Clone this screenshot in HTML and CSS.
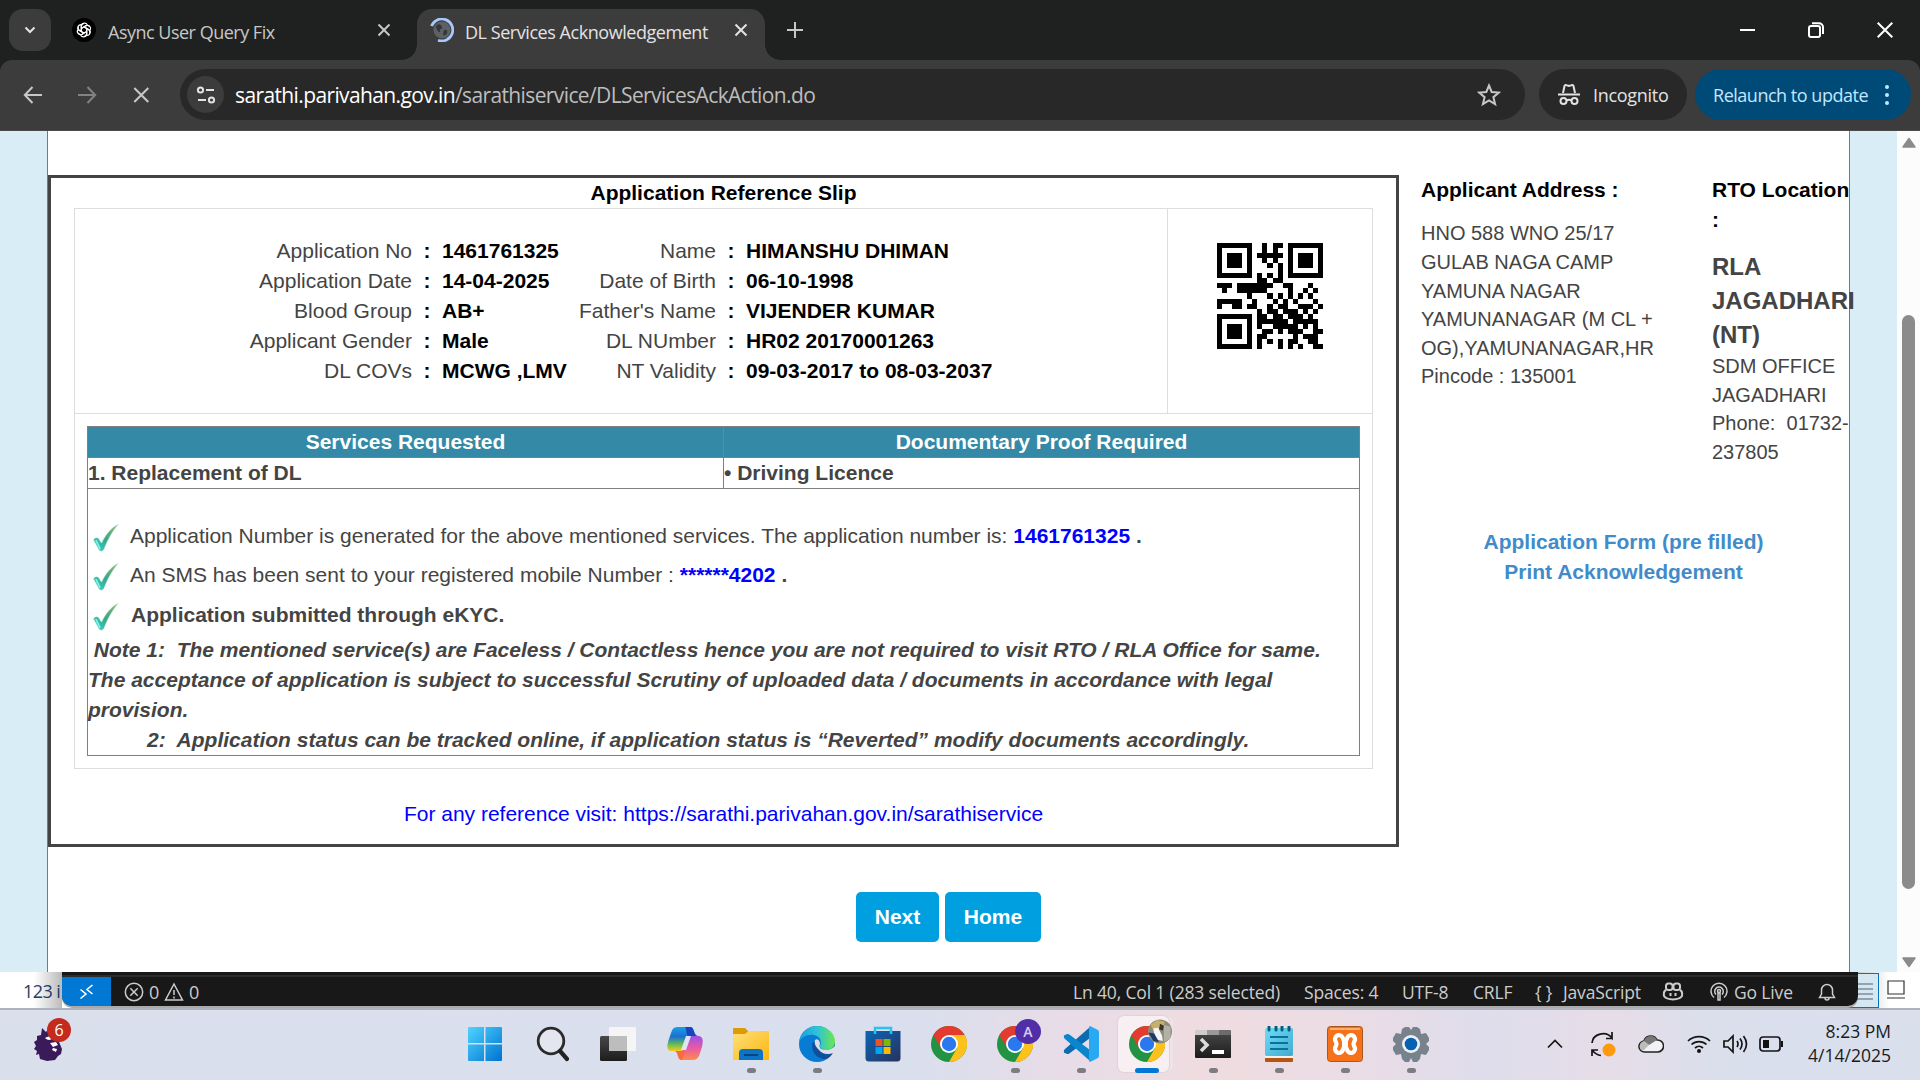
FILE: index.html
```html
<!DOCTYPE html>
<html lang="en">
<head>
<meta charset="utf-8">
<title>DL Services Acknowledgement</title>
<link rel="stylesheet" href="styles.css">
</head>
<body>
<svg class="defs" width="0" height="0" aria-hidden="true">
  <defs>
    <linearGradient id="tickFill" x1="0" y1="1" x2="1" y2="0"><stop offset="0" stop-color="#3ed6d2"/><stop offset=".45" stop-color="#35a888"/><stop offset="1" stop-color="#9bb66c"/></linearGradient>
    <linearGradient id="winFill" x1="0" y1="0" x2="1" y2="1"><stop offset="0" stop-color="#4fd4ff"/><stop offset="1" stop-color="#0072d0"/></linearGradient>
    <linearGradient id="folderFill" x1="0" y1="0" x2="1" y2="1"><stop offset="0" stop-color="#ffe07a"/><stop offset="1" stop-color="#fbb60f"/></linearGradient>
    <linearGradient id="darkFill" x1="0" y1="0" x2="0" y2="1"><stop offset="0" stop-color="#484848"/><stop offset="1" stop-color="#1c1c1c"/></linearGradient>
    <linearGradient id="cpLeft" x1="0" y1="0" x2="0" y2="1"><stop offset="0" stop-color="#1a9ee8"/><stop offset=".4" stop-color="#1d6fd0"/><stop offset=".7" stop-color="#5cb85c"/><stop offset="1" stop-color="#f5cf1c"/></linearGradient>
    <linearGradient id="cpRight" x1="0" y1="0" x2="0" y2="1"><stop offset="0" stop-color="#9b50e8"/><stop offset=".5" stop-color="#e85aa5"/><stop offset="1" stop-color="#ff8a4c"/></linearGradient>
    <linearGradient id="edgeTop" x1="0" y1="0" x2="1" y2="0"><stop offset="0" stop-color="#1b9de0"/><stop offset=".5" stop-color="#2dc2d8"/><stop offset="1" stop-color="#6ce84e"/></linearGradient>
    <linearGradient id="storeFill" x1="0" y1="0" x2="1" y2="1"><stop offset="0" stop-color="#0a66b8"/><stop offset="1" stop-color="#27325c"/></linearGradient>
    <linearGradient id="noteFill" x1="0" y1="0" x2="1" y2="1"><stop offset="0" stop-color="#6cdcf6"/><stop offset="1" stop-color="#45a9cf"/></linearGradient>
    <symbol id="tick" viewBox="0 0 28 28"><path d="M1 16c1-3 5-3 6 0l2 3C13 11 18 4 26 0c-6 7-11 16-14 24-1 4-5 4-6 1z" fill="url(#tickFill)" stroke="#cfeee4" stroke-width=".600"/><path d="M3.500 16l4 9" stroke="#7df0ea" stroke-width="1.800" fill="none"/></symbol>
    <symbol id="chrome" viewBox="0 0 36 36"><circle cx="18" cy="18" r="18" fill="#229342"/><path d="M18 9h15.600A18 18 0 0 1 18 36l7.800-13.500z" fill="#fcc21b"/><path d="M18 9h15.600A18 18 0 0 0 2.400 9l7.800 13.500z" fill="#e33b2e"/><circle cx="18" cy="18" r="9" fill="#fff"/><circle cx="18" cy="18" r="7.200" fill="#2a78ee"/></symbol>
  </defs>
</svg>

<header class="browser">
  <div class="tabstrip">
    <div class="tab-search"><svg width="12" height="8" viewBox="0 0 12 8"><path d="M1.500 1.500L6 6l4.500-4.500" class="ico light"/></svg></div>
    <div class="tab">
      <svg class="favicon" width="24" height="24" viewBox="0 0 24 24"><circle cx="12" cy="12" r="12" fill="#000"/><g fill="none" stroke="#fff" stroke-width="1.200"><path id="petal" d="M9.300 13.600V8.300a3.200 3.200 0 0 1 6-1.500M9.300 10.400L13.800 7.800a3.100 3.100 0 0 1 3.900 1"/><use href="#petal" transform="rotate(60 12 12)"/><use href="#petal" transform="rotate(120 12 12)"/><use href="#petal" transform="rotate(180 12 12)"/><use href="#petal" transform="rotate(240 12 12)"/><use href="#petal" transform="rotate(300 12 12)"/></g></svg>
      <span class="tab-title t1">Async User Query Fix</span>
      <svg class="tab-x" width="14" height="14" viewBox="0 0 14 14"><path d="M1.500 1.500l11 11M12.500 1.500l-11 11" class="ico"/></svg>
    </div>
    <div class="tab active">
      <svg class="favicon" width="24" height="24" viewBox="0 0 24 24"><circle cx="12" cy="12" r="8.500" fill="#5d6064"/><path d="M6 8c3-3 5-2 6 1s-3 1-2 4-4 0-4-5zM14 12c2-1 4 0 3 3s-4 3-4 1z" fill="#34373a"/><path d="M1.500 8A11 11 0 1 1 8 22.300" fill="none" stroke="#a8c7fa" stroke-width="2.800"/></svg>
      <span class="tab-title t2">DL Services Acknowledgement</span>
      <svg class="tab-x" width="14" height="14" viewBox="0 0 14 14"><path d="M1.500 1.500l11 11M12.500 1.500l-11 11" class="ico light"/></svg>
    </div>
    <svg class="new-tab" width="18" height="18" viewBox="0 0 18 18"><path d="M9 1v16M1 9h16" class="ico"/></svg>
    <div class="win-buttons">
      <svg width="15" height="16" viewBox="0 0 15 16"><path d="M0 8h15" class="win"/></svg>
      <svg width="16" height="16" viewBox="0 0 16 16"><rect x="1" y="4" width="11" height="11" rx="2" class="win"/><path d="M4 1.200h7a4 4 0 0 1 4 4V12" class="win"/></svg>
      <svg width="16" height="16" viewBox="0 0 16 16"><path d="M.7.700l14.600 14.600M15.300.7L.7 15.300" class="win"/></svg>
    </div>
  </div>
  <div class="toolbar">
    <svg class="nav" width="20" height="18" viewBox="0 0 20 18"><path d="M19 9H2M9.500 1L1.800 9l7.700 8" class="ico"/></svg>
    <svg class="nav dim" width="20" height="18" viewBox="0 0 20 18"><path d="M1 9h17M10.500 1l7.700 8-7.700 8" class="ico"/></svg>
    <svg class="nav" width="20" height="18" viewBox="0 0 20 18"><path d="M3.300 2l14 14M17.300 2l-14 14" class="ico"/></svg>
    <div class="omnibox">
      <div class="site-info"><svg width="20" height="18" viewBox="0 0 20 18"><g fill="none" stroke="#e3e3e3" stroke-width="2"><circle cx="4.500" cy="4" r="2.600"/><path d="M10 4h8"/><circle cx="15.500" cy="14" r="2.600"/><path d="M2 14h8"/></g></svg></div>
      <span class="url"><b>sarathi.parivahan.gov.in</b>/sarathiservice/DLServicesAckAction.do</span>
      <svg class="star" width="24" height="24" viewBox="0 0 24 24"><path d="M12 2.500l2.700 6.500 7.100.6-5.400 4.600 1.700 6.900L12 17.400l-6.100 3.700 1.700-6.900-5.400-4.600 7.100-.6z" class="ico"/></svg>
    </div>
    <div class="pill incognito"><svg width="22" height="22" viewBox="0 0 22 22"><path d="M5 9l1.500-7c.3-1 1-1.200 1.800-.8 1.600.8 3.800.8 5.400 0 .8-.4 1.500-.2 1.800.8L17 9" fill="none" stroke="#e3e3e3" stroke-width="2"/><path d="M0 10.500h22" stroke="#e3e3e3" stroke-width="2"/><g fill="none" stroke="#e3e3e3" stroke-width="2"><circle cx="5.500" cy="17" r="3"/><circle cx="16.500" cy="17" r="3"/><path d="M8.500 16.500q2.500-1.500 5 0"/></g></svg><span>Incognito</span></div>
    <div class="pill relaunch"><span>Relaunch to update</span><i class="dots"></i></div>
  </div>
</header>

<main class="viewport">
  <div class="page">
    <div class="columns">
      <section class="slip">
        <h1>Application Reference Slip</h1>
        <div class="panel">
          <div class="summary">
            <dl class="details">
              <dt>Application No</dt><i>:</i><dd>1461761325</dd><dt>Name</dt><i>:</i><dd>HIMANSHU DHIMAN</dd>
              <dt>Application Date</dt><i>:</i><dd>14-04-2025</dd><dt>Date of Birth</dt><i>:</i><dd>06-10-1998</dd>
              <dt>Blood Group</dt><i>:</i><dd>AB+</dd><dt>Father's Name</dt><i>:</i><dd>VIJENDER KUMAR</dd>
              <dt>Applicant Gender</dt><i>:</i><dd>Male</dd><dt>DL NUmber</dt><i>:</i><dd>HR02 20170001263</dd>
              <dt>DL COVs</dt><i>:</i><dd>MCWG ,LMV</dd><dt>NT Validity</dt><i>:</i><dd>09-03-2017 to 08-03-2037</dd>
            </dl>
            <div class="qr"><svg width="106" height="106" viewBox="0 0 21 21" shape-rendering="crispEdges"><path id="qr-modules"/></svg></div>
          </div>
          <div class="services">
            <div class="row head"><span>Services Requested</span><span>Documentary Proof Required</span></div>
            <div class="row"><span>1. Replacement of DL</span><span>• Driving Licence</span></div>
            <div class="messages">
              <p class="msg"><svg width="28" height="28"><use href="#tick"/></svg><span>Application Number is generated for the above mentioned services. The application number is: <b><em>1461761325</em> .</b></span></p>
              <p class="msg"><svg width="28" height="28"><use href="#tick"/></svg><span>An SMS has been sent to your registered mobile Number : <b><em>******4202</em> .</b></span></p>
              <p class="msg"><svg width="28" height="28"><use href="#tick"/></svg><b class="ekyc">Application submitted through eKYC.</b></p>
              <p class="note">&nbsp;Note 1:&nbsp; The mentioned service(s) are Faceless / Contactless hence you are not required to visit RTO / RLA Office for same.<br>The acceptance of application is subject to successful Scrutiny of uploaded data / documents in accordance with legal<br>provision.<br><span class="note-two">2:&nbsp; Application status can be tracked online, if application status is “Reverted” modify documents accordingly.</span></p>
            </div>
          </div>
        </div>
        <p class="visit">For any reference visit: https://sarathi.parivahan.gov.in/sarathiservice</p>
      </section>
      <aside class="side">
        <div class="addresses">
          <div class="address"><h2>Applicant Address :</h2><p>HNO 588 WNO 25/17<br>GULAB NAGA CAMP<br>YAMUNA NAGAR<br>YAMUNANAGAR (M CL +<br>OG),YAMUNANAGAR,HR<br>Pincode : 135001</p></div>
          <div class="address rto"><h2>RTO Location<br>:</h2><h3>RLA<br>JAGADHARI<br>(NT)</h3><p>SDM OFFICE<br>JAGADHARI<br>Phone:&nbsp; 01732-<br>237805</p></div>
        </div>
        <div class="links"><a>Application Form (pre filled)</a><a>Print Acknowledgement</a></div>
      </aside>
    </div>
    <div class="actions"><button>Next</button><button>Home</button></div>
  </div>
  <div class="scrollbar">
    <svg width="14" height="11" viewBox="0 0 14 11"><path d="M7 1.500L13 10H1z" fill="#8b8b8b" stroke="#8b8b8b" stroke-width="1.500" stroke-linejoin="round"/></svg>
    <div class="thumb"></div>
    <svg class="down" width="14" height="11" viewBox="0 0 14 11"><path d="M7 9.500L13 1H1z" fill="#8b8b8b" stroke="#8b8b8b" stroke-width="1.500" stroke-linejoin="round"/></svg>
  </div>
</main>

<div class="window-edge">
  <div class="items">123 i</div>
  <div class="status">
    <div class="remote"><svg width="16" height="16" viewBox="0 0 16 16"><path d="M1.500 5.500L7 10l-5.500 4.500M13.500 1L8 5.500l5.500 4.500" fill="none" stroke="#fff" stroke-width="1.600"/></svg></div>
    <svg class="s-err" width="20" height="20" viewBox="0 0 20 20"><g class="st"><circle cx="10" cy="10" r="8.700"/><path d="M6.300 6.300l7.400 7.400M13.700 6.300l-7.400 7.400"/></g></svg><span class="s-zero">0</span>
    <svg class="s-warn" width="20" height="20" viewBox="0 0 20 20"><g class="st"><path d="M10 2L18.500 18h-17z"/><path d="M10 8v5M10 14.500v2"/></g></svg><span class="s-zero">0</span>
    <span class="s-ln">Ln 40, Col 1 (283 selected)</span><span class="s-sp">Spaces: 4</span><span class="s-utf">UTF-8</span><span class="s-crlf">CRLF</span><span class="s-br">{ }</span><span class="s-js">JavaScript</span>
    <svg class="s-cop" width="22" height="20" viewBox="0 0 22 20"><g class="st heavy"><rect x="4" y="1.500" width="6.500" height="6.500" rx="2.500"/><rect x="11.500" y="1.500" width="6.500" height="6.500" rx="2.500"/><path d="M4 8c-2 1-2.500 3-2 6 3 4.500 15 4.500 18 0 .5-3 0-5-2-6M8.500 11v3M13.500 11v3"/></g></svg>
    <svg class="s-live" width="18" height="20" viewBox="0 0 18 20"><g class="st"><path d="M4 15.500a8 8 0 1 1 10 0"/><path d="M6 12.500a4.300 4.300 0 1 1 6 0"/><circle cx="9" cy="9" r="1.500"/><path d="M8 11h2v7H8z"/></g></svg><span class="s-go">Go Live</span>
    <svg class="s-bell" width="18" height="20" viewBox="0 0 18 20"><g class="st"><path d="M1.500 15.500L3.500 12V8a5.500 5.500 0 0 1 11 0v4l2 3.500zM7 16a2 2 0 0 0 4 0"/></g></svg>
  </div>
  <div class="views"><div class="view on"><svg width="20" height="20" viewBox="0 0 20 20"><path d="M0 3h16M0 8h16M0 13h16M0 18h16" stroke="#526170" stroke-width="1.200"/></svg></div><svg class="view-big" width="18" height="20" viewBox="0 0 18 20"><path d="M1 1h16v13H1zM0 18h18" fill="none" stroke="#333" stroke-width="1.200"/></svg></div>
</div>

<footer class="taskbar">
  <div class="widget"><svg width="28" height="34" viewBox="0 0 28 34"><path d="M8 1l4 4 3-4 4 4 5-2 3 7-2 5 3 7-1 5-3 2-3 4-8 1-7-2-1-5-3 1 1-4-3-2 2-3-2-4 3-2 0-4 4-1z" fill="#3b1a59"/><path d="M11 11q4-3 8 0-4 4-8 0zM16 16l6-1 2 3-5 2zM19 21l4 1-1 3-4-2z" fill="#fff"/></svg><span class="badge">6</span></div>
  <div class="apps">
    <div class="app"><svg width="36" height="36" viewBox="0 0 36 36"><path d="M1 2q0-1 1-1h15v16H1zM18.500 1H34q1 0 1 1v15H18.500zM1 18.500h16V35H2q-1 0-1-1zM18.500 18.500H35V34q0 1-1 1H18.500z" fill="url(#winFill)"/></svg></div>
    <div class="app"><svg width="36" height="36" viewBox="0 0 36 36"><circle cx="18" cy="15" r="12.800" fill="#e3e6ee" stroke="#2b2b2b" stroke-width="2.800"/><path d="M27 25l7 8" stroke="#222" stroke-width="4.200" stroke-linecap="round"/></svg></div>
    <div class="app nudge"><svg width="36" height="36" viewBox="0 0 36 36"><rect y="10" width="27" height="25" rx="1.500" fill="url(#darkFill)"/><rect x="9" y="1" width="27" height="24" rx="1" fill="#f5f5f5"/><path d="M9 10h18v15H9z" fill="#bdbdbd"/></svg></div>
    <div class="app nudge"><svg width="36" height="36" viewBox="0 0 36 36"><path d="M10 1h14c3 0 3 9 7 9h-6c-4 0-5 14-9 15H4c-7 0-2-12 0-18 1-4 3-6 6-6z" fill="url(#cpLeft)"/><path d="M18 1h6c3 0 3 9 6 9h-8c-3 0-2-6-4-9z" fill="#1845bf"/><path d="M26 34H14c-4 0-3-9-6-9h6c5 0 6-15 10-15h7c7 0 5 9 2 17-1 4-3 7-7 7z" fill="url(#cpRight)"/><path d="M8 25h10l-3 9c-4 0-3-8-7-9z" fill="#fa6a3a"/><path d="M19 10h5l-5 14h-5z" fill="#dde4f2"/></svg></div>
    <div class="app run"><svg width="36" height="36" viewBox="0 0 36 36"><path d="M0 3q0-1 1-1h11l3 3v5H0z" fill="#dc9a08"/><path d="M0 8h12l4-3h19q1 0 1 1v27q0 1-1 1H1q-1 0-1-1z" fill="url(#folderFill)"/><path d="M6 34V27q0-4 4-4h16q4 0 4 4v7z" fill="#0c74c4"/><path d="M11 29h14" stroke="#07457e" stroke-width="2"/></svg></div>
    <div class="app run"><svg width="36" height="36" viewBox="0 0 36 36"><circle cx="18" cy="18" r="18" fill="#087bd3"/><path d="M0 17C1 6 9 0 18 0c11 0 18 8 18 15 0 6-4 9-9 9-4 0-6-2-6-4 2-3 1-10-6-11C8 8 2 11 0 17z" fill="url(#edgeTop)"/><path d="M14 16c-3 8 3 17 12 17 3 0 6-3 8-6-5 3-14 1-14-6 0-3-2-5-6-5z" fill="#114f9d"/><path d="M16 14c3-2 5 1 5 4-1 2-1 6 6 6 4 0 7-2 9-4v5l-2 2c-5 2-11 1-14-3-3-3-5-6-4-10z" fill="#dbe0ec"/></svg></div>
    <div class="app"><svg width="36" height="36" viewBox="0 0 36 36"><path d="M10 8V2h16v6" fill="none" stroke="#26c2f5" stroke-width="2.500"/><path d="M.500 5h35v27q0 3.500-3.500 3.500H4Q.5 35.500.5 32z" fill="url(#storeFill)"/><path d="M10 5v3M26 5v3" stroke="#26c2f5" stroke-width="2.500"/><path d="M10.500 13h7v7h-7z" fill="#f25022"/><path d="M18.500 13h7v7h-7z" fill="#7fba00"/><path d="M10.500 21h7v7h-7z" fill="#00a4ef"/><path d="M18.500 21h7v7h-7z" fill="#ffb900"/></svg></div>
    <div class="app"><svg width="36" height="36"><use href="#chrome"/></svg></div>
    <div class="app run"><svg width="36" height="36"><use href="#chrome"/></svg><span class="profile letter">A</span></div>
    <div class="app run"><svg width="36" height="36" viewBox="0 0 36 36"><path d="M27 1l-25 22c-2 2-1 4 0 4l2 1c1 0 2 0 3-1L27 12z" fill="#0b6cb0"/><path d="M27 35L2 13c-2-2-1-4 0-4l2-1c1 0 2 0 3 1l20 15z" fill="#0a86d1"/><path d="M27 0l8 4q1 1 1 2v24q0 1-1 2l-8 4q-1 0-1-2V2q0-2 1-2z" fill="#29a9f2"/></svg></div>
    <div class="app run current"><svg width="36" height="36"><use href="#chrome"/></svg><svg class="profile photo" width="26" height="26" viewBox="0 0 26 26"><circle cx="13" cy="13" r="12.500" fill="#8d8b78"/><path d="M3 6l7-5 8 2-3 8-8 2z" fill="#c7b06b"/><path d="M17 6l7 2v12l-7 4z" fill="#b3b1a4"/><path d="M6 10l5-1 4 8 1 6-8-2z" fill="#f5f6f8"/><path d="M1 14l6 1 5 9-6-1z" fill="#1c3b67"/><path d="M13 5l4 2-1 5-4-1z" fill="#363630"/></svg></div>
    <div class="app run"><svg width="36" height="36" viewBox="0 0 36 36"><path d="M0 5h36v26q0 1-1 1H1q-1 0-1-1z" fill="url(#darkFill)"/><path d="M0 9V5q0-1 1-1h11v5z" fill="#ccc"/><path d="M12 4h12v5H12z" fill="#999"/><path d="M24 4h11q1 0 1 1v4H24z" fill="#6b6b6b"/><path d="M6 13l6 6-6 6" fill="none" stroke="#ddd" stroke-width="3.500"/><path d="M17 24h12v4H17z" fill="#fff"/></svg></div>
    <div class="app run"><svg width="36" height="36" viewBox="0 0 36 36"><path d="M4 32h28v3q0 1-1 1H5q-1 0-1-1z" fill="#b75412"/><path d="M4 29h28v3H4z" fill="#f3f3f3"/><rect x="4" y="2" width="28" height="28" rx="1.500" fill="url(#noteFill)"/><path d="M8 1v3M15 1v3M21 1v3M28 1v3" stroke="#075d7c" stroke-width="3" stroke-linecap="round"/><path d="M9 11h18M9 17h18M9 23h18" stroke="#07739b" stroke-width="2"/></svg></div>
    <div class="app run"><svg width="36" height="36" viewBox="0 0 36 36"><rect x=".500" y=".500" width="35" height="35" rx="3" fill="#f5721b" stroke="#a9561f"/><path d="M3 3h30" stroke="#ffae70" stroke-width="2"/><path d="M15 18h6M18 16c-2 0-1-7-6-7a4.300 4.300 0 0 0-3 7q1 2 0 4a4.300 4.300 0 0 0 3 7c5 0 4-7 6-7s1 7 6 7a4.300 4.300 0 0 0 3-7q-1-2 0-4a4.300 4.300 0 0 0-3-7c-5 0-4 7-6 7z" fill="none" stroke="#fff" stroke-width="4.200" stroke-linejoin="round"/></svg></div>
    <div class="app run"><svg width="36" height="36" viewBox="0 0 36 36"><path d="M12 1h4l2 3 2-3h4l3 2 1 5 5-1 3 5v3l-3 3 3 3v3l-3 5-5-1-1 5-3 3h-4l-2-4-2 4h-4l-3-3-1-5-5 1-3-5v-3l3-3-3-3v-3l3-5 5 1 1-5z" fill="#77828c"/><circle cx="18" cy="18" r="9" fill="#edf1f5"/><circle cx="18" cy="18" r="6.300" fill="#0761b2"/></svg></div>
  </div>
  <div class="tray">
    <svg class="t-chev" width="16" height="10" viewBox="0 0 16 10"><path d="M1 8.500L8 1.500l7 7" class="tr"/></svg>
    <svg class="t-sync" width="26" height="26" viewBox="0 0 26 26"><path d="M2 12A11 10 0 0 1 22 7V1M22 7.500h-6M2 25v-6h6M2 19q4 5 9 5.500" class="tr"/><circle cx="19" cy="19" r="6.500" fill="#ff9a0c"/></svg>
    <svg class="t-cloud" width="26" height="20" viewBox="0 0 26 20"><path d="M7 18a5.500 5.500 0 0 1-1-11 7 7 0 0 1 13-1 6 6 0 0 1 1 12z" fill="#f1f2f5" stroke="#222" stroke-width="1.600"/><path d="M6 7a7 7 0 0 1 13-1l-8 5-4-3z" fill="#777"/><path d="M6 7l5 4-6 6c-5-2-4-9 1-10z" fill="#bcbcbc"/></svg>
    <svg class="t-wifi" width="24" height="20" viewBox="0 0 24 20"><path d="M1 7a16 16 0 0 1 22 0M4.500 10.500a11 11 0 0 1 15 0M8 14a6 6 0 0 1 8 0" class="tr"/><circle cx="12" cy="17" r="2" fill="#111"/></svg>
    <svg class="t-vol" width="25" height="20" viewBox="0 0 25 20"><path d="M1 7h4l5-5v16l-5-5H1zM14 7q2 3 0 6M17 4.500q4 5.500 0 11M20.500 2q6 8 0 16" class="tr"/></svg>
    <svg class="t-bat" width="25" height="18" viewBox="0 0 25 18"><rect x="1" y="2" width="20" height="14" rx="3" class="tr"/><path d="M4 5h6v8H4zM22 6h2v6h-2z" fill="#111"/></svg>
    <div class="clock">8:23 PM<br>4/14/2025</div>
  </div>
</footer>
<script src="qr.js"></script>
</body>
</html>
```
FILE: styles.css
```css
* { box-sizing: border-box; margin: 0; padding: 0; }
body { width: 1920px; height: 1080px; overflow: hidden; display: flex; flex-direction: column; font-family: "Liberation Sans", Arial, sans-serif; font-size: 21px; line-height: 30px; color: #444; background: #fff; }
svg { display: block; flex: none; }
.defs { position: absolute; }
.ico { fill: none; stroke: #c7c7c7; stroke-width: 2; }
.light { stroke: #e3e3e3; }
.win { fill: none; stroke: #fff; stroke-width: 2; }

.browser { height: 131px; flex: none; background: #1f2120; font-family: "Open Sans", "Noto Sans", sans-serif; line-height: 24px; white-space: nowrap; }
.tabstrip { height: 60px; display: flex; padding: 9px 27px 0 9px; }
.tab-search { width: 42px; height: 42px; border-radius: 14px; background: #3c3c3c; display: flex; align-items: center; justify-content: center; }
.tab { height: 51px; display: flex; align-items: center; width: 366px; padding: 0 26px 9px 21px; }
.tab.active { position: relative; width: 348px; padding: 0 17px 9px 13px; background: #3c3c3c; border-radius: 15px 15px 0 0; }
.tab.active::before, .tab.active::after { content: ""; position: absolute; bottom: 0; width: 15px; height: 15px; }
.tab.active::before { left: -15px; background: radial-gradient(circle at 0 0, transparent 14.5px, #3c3c3c 15px); }
.tab.active::after { right: -15px; background: radial-gradient(circle at 15px 0, transparent 14.5px, #3c3c3c 15px); }
.tab-title { margin-left: 12px; margin-top: 3px; font-size: 18px; color: #c7c7c7; }
.t1 { letter-spacing: -.5px; }
.t2 { letter-spacing: -.45px; color: #e3e3e3; margin-left: 11px; }
.tab-x { margin-left: auto; }
.new-tab { margin: 12px 0 0 21px; }
.win-buttons { margin: 13px 0 0 auto; display: flex; gap: 53px; }
.toolbar { height: 71px; display: flex; padding: 9px 9px 0 23px; background: #3c3c3c; border-radius: 12px 12px 0 0; border-bottom: 1px solid #4a4a4a; }
.nav { margin: 17px 34px 0 0; }
.nav.dim { opacity: .5; }
.nav:nth-child(3) { margin-right: 29px; }
.omnibox { width: 1345px; height: 51px; border-radius: 26px; background: #282828; display: flex; align-items: center; padding: 0 24px 0 7px; }
.site-info { width: 37px; height: 37px; border-radius: 50%; background: #3c3c3c; display: flex; align-items: center; justify-content: center; }
.url { margin-left: 11px; font-size: 21px; color: #bdbdbd; letter-spacing: -.62px; }
.url b { font-weight: 400; color: #fff; }
.star { margin-left: auto; }
.pill { height: 51px; border-radius: 26px; display: flex; align-items: center; font-size: 18px; color: #e3e3e3; background: #282828; }
.incognito { width: 148px; margin-left: 14px; padding-left: 19px; gap: 13px; letter-spacing: -.3px; }
.relaunch { width: 216px; margin-left: 8px; padding-left: 18px; background: #004a77; color: #c2e7ff; letter-spacing: -.48px; }
.dots { width: 4px; height: 4px; border-radius: 50%; background: #c2e7ff; box-shadow: 0 -8px #c2e7ff, 0 8px #c2e7ff; margin: 0 22px 0 auto; }

.viewport { height: 841px; flex: none; display: flex; background: #d9edf6; padding-left: 47px; }
.page { width: 1803px; height: 841px; background: #fff; border: solid #0b9fd8; border-width: 0 1px; padding-top: 44px; }
.columns { display: flex; }
.slip { width: 1351px; height: 672px; border: 3px solid #444; padding: 0 23px; color: #444; }
h1 { font-size: 21px; line-height: 30px; text-align: center; color: #000; }
.panel { width: 1299px; height: 561px; border: 1px solid #ddd; }
.summary { height: 205px; display: flex; border-bottom: 1px solid #ddd; }
.details { width: 1093px; border-right: 1px solid #ddd; padding-top: 27px; display: grid; grid-template-columns: 337px 30px 125px 149px 30px 1fr; grid-auto-rows: 30px; white-space: nowrap; }
.details dt { text-align: right; }
.details i { font-style: normal; font-weight: 700; text-align: center; color: #000; }
.details dd { font-weight: 700; color: #000; }
.qr { padding: 34px 0 0 49px; }
.services { width: 1273px; margin: 12px; height: 330px; border: 1px solid #808080; }
.row { height: 31px; display: flex; border-bottom: 1px solid #808080; font-weight: 700; }
.row span { width: 636px; }
.row span:first-child { width: 637px; border-right: 1px solid #808080; }
.head { color: #fff; background: #348aa6; text-align: center; }
.messages { padding-top: 29px; white-space: nowrap; }
.msg { height: 39px; display: flex; padding: 3px 0 0 5px; }
.msg + .msg { height: 39.500px; }
.msg span, .ekyc { margin-left: 9px; }
.ekyc { padding-left: 1px; }
.msg svg { margin: 3px 0 0 -1px; width: 29px; }
em { font-style: normal; color: #00f; }
.note { font-weight: 700; font-style: italic; margin-top: -1px; }
.note-two { padding-left: 59px; }
.visit { margin-top: 30px; text-align: center; color: #00f; }
.side { width: 450px; }
.addresses { display: flex; padding-left: 22px; height: 352px; white-space: nowrap; }
.address { width: 291px; font-size: 20px; line-height: 28.570px; }
.rto { width: 137px; }
h2 { font-size: 21px; line-height: 30px; color: #000; margin-bottom: 14.400px; }
.rto h2 { margin-bottom: 15px; }
h3 { font-size: 24px; line-height: 34px; color: #444; }
.links { display: flex; flex-direction: column; align-items: center; color: #428bca; font-weight: 700; padding-right: 1px; }
.actions { display: flex; gap: 6px; padding: 45px 0 0 808px; }
button { height: 50px; border: 0; border-radius: 5px; background: #009fdf; color: #fff; font: 700 21px "Liberation Sans", Arial, sans-serif; width: 83px; }
button + button { width: 96px; }
.scrollbar { width: 23px; margin-left: 47px; background: #fcfcfc; padding: 6px 0 0 5px; flex: none; }
.thumb { width: 13px; height: 574px; margin: 167px 0 0; border-radius: 7px; background: #8b8b8b; }
.down { margin-top: 68px; }

.window-edge { height: 38px; flex: none; display: flex; position: relative; background: #fff; border-bottom: 2px solid #b0b3bb; font-family: "Open Sans", "Noto Sans", sans-serif; font-size: 18px; line-height: 38px; white-space: nowrap; }
.items { width: 62px; padding-left: 23px; color: #253d60; letter-spacing: -.6px; background: linear-gradient(90deg, #fff 55%, #bbb); overflow: hidden; }
.status { width: 1796px; height: 34px; border-radius: 0 0 10px 10px; color: #ccc; display: flex; align-items: center; padding-top: 5px; line-height: 24px; overflow: hidden; box-shadow: 0 2px 0 0 #aaa; z-index: 1; background: linear-gradient(#181818 3px, #2b2b2b 3px 5px, #181818 5px); }
.remote { width: 49px; height: 29px; background: #0078d4; display: flex; align-items: center; justify-content: center; }
.st { fill: none; stroke: #ccc; stroke-width: 1.500; }
.heavy { stroke-width: 2; }
.s-err { margin-left: 13px; }
.s-zero { margin-left: 5px; width: 10px; }
.s-warn { margin-left: 5px; }
.s-ln, .s-sp, .s-utf, .s-crlf, .s-br, .s-js, .s-go { flex: none; font-size: 17.500px; letter-spacing: -.15px; }
.s-ln { width: 231px; margin-left: 874px; }
.s-sp { width: 98px; }
.s-utf { width: 71px; }
.s-crlf { width: 62px; }
.s-br { width: 28px; }
.s-js { width: 99px; }
.s-live { margin-left: 26px; }
.s-go { margin-left: 6px; width: 84px; }
.views { display: flex; width: 62px; background: linear-gradient(90deg, #ccc, #fff 50%); }
.view { width: 32px; height: 35px; margin: 1px 8px 0 -11px; border: 1px solid #0a72bd; background: #d5e8f2; padding: 7px 0 0 9px; flex: none; }
.view-big { margin-top: 8px; }

.taskbar { height: 70px; flex: none; display: flex; background: linear-gradient(90deg, #d9e0ec 0, #dadfed 920px, #e8dce7 1070px, #efdce0 1200px, #ecdce4 1330px, #dfddec 1480px, #e6dde8 1610px, #dadfec 1720px, #d9e0ec); font-family: "Open Sans", "Noto Sans", sans-serif; }
.widget { position: relative; width: 434px; padding: 17px 0 0 34px; }
.badge { position: absolute; left: 47px; top: 8px; width: 24px; height: 24px; border-radius: 50%; background: #c42b1c; color: #fff; font-size: 16px; line-height: 24px; text-align: center; }
.apps { display: flex; width: 1113px; padding-left: 18px; }
.app { position: relative; width: 66px; padding: 16px 0 0 15px; flex: none; }
.nudge { margin-left: 1px; }
.app > svg { position: relative; }
.run::after { content: ""; position: absolute; left: 29px; top: 58px; width: 9px; height: 5px; border-radius: 3px; background: #7c7c82; }
.current::before { content: ""; position: absolute; left: 4px; top: 6px; width: 51px; height: 56px; border-radius: 6px; background: #f7eff1; box-shadow: 0 0 0 1px #e1d3d8, 5px 0 0 -1px #f0e3e7; }
.current::after { left: 21px; width: 24px; background: #0078d4; }
.app > .profile { position: absolute; left: 33px; top: 9px; width: 26px; height: 25px; border-radius: 50%; }
.letter { background: #512da8; color: #d9ceee; font-size: 14px; line-height: 25px; text-align: center; font-weight: 600; }
.tray { display: flex; width: 373px; }
.tr { fill: none; stroke: #151515; stroke-width: 1.700; }
.t-chev { margin: 29px 0 0 0; }
.t-sync { margin: 21px 0 0 27px; }
.t-cloud { margin: 24px 0 0 22px; }
.t-wifi { margin: 24px 0 0 23px; }
.t-vol { margin: 24px 0 0 12px; }
.t-bat { margin: 25px 0 0 11px; }
.clock { margin: 9px 29px 0 auto; text-align: right; font-size: 17.500px; line-height: 24px; color: #1b1b1b; letter-spacing: 0; }
```
FILE: qr.js
```js
// Module rows of the application QR code, one character per module.
const rows = [
  "111111100101101111111",
  "100000100101001000001",
  "101110101111101011101",
  "101110100101001011101",
  "101110100010101011101",
  "100000100000101000001",
  "111111101010101111111",
  "000000001101100000000",
  "111011111110011000100",
  "010011111100001001010",
  "000000100010101010100",
  "111110010001010100010",
  "100110110010110011101",
  "000000001011011101010",
  "111111101101101110100",
  "100000101111110111110",
  "101110101001111101010",
  "101110100110101110011",
  "101110101100000101110",
  "100000101010101100110",
  "111111101000101010011"
];
const path = rows.map((row, y) => [...row].map((m, x) => m === "1" ? `M${x} ${y}h1v1h-1z` : "").join("")).join("");
document.getElementById("qr-modules").setAttribute("d", path);
```
